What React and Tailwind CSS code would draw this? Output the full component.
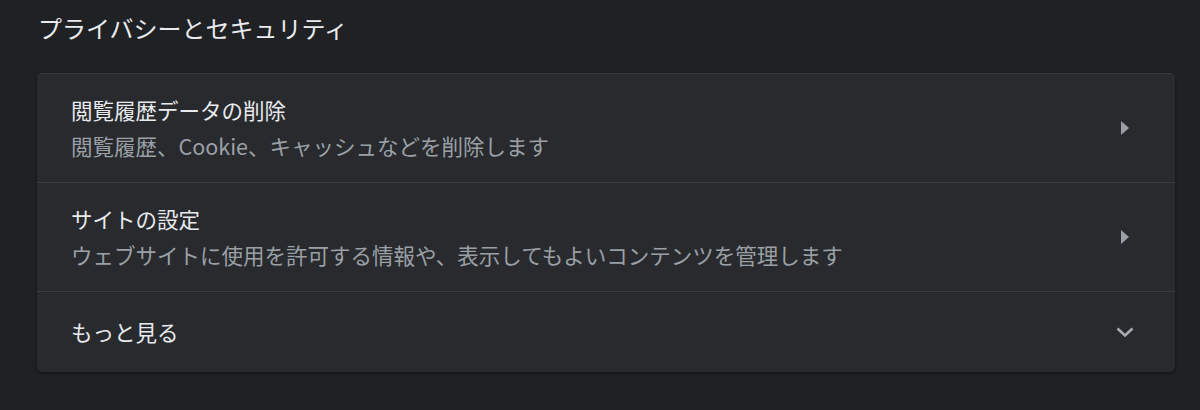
import React from "react";

const font = { fontFamily: '"Noto Sans CJK JP", "Noto Sans", sans-serif' };

function Triangle() {
  return (
    <svg width="24" height="24" viewBox="0 0 24 24" className="shrink-0">
      <path d="M8 5 L16 12 L8 19 Z" fill="#9aa0a6" />
    </svg>
  );
}

function Chevron() {
  return (
    <svg width="24" height="24" viewBox="0 0 24 24" className="shrink-0">
      <path d="M4.5 8.5 L12 15.5 L19.5 8.5" fill="none" stroke="#a8acb1" strokeWidth="2.6" />
    </svg>
  );
}

function Row({ title, sub, icon, last }) {
  return (
    <div
      className={`flex items-center pl-[34px] pr-[38px] ${sub ? "py-[18px]" : "py-[22px]"} ${
        last ? "" : "border-b border-[#3c3d41]"
      }`}
    >
      <div className="flex-1 flex flex-col">
        <div className="text-[21.5px] leading-[36px] text-[#e8eaed]">{title}</div>
        {sub && <div className="text-[21.5px] leading-[36px] text-[#9aa0a6]">{sub}</div>}
      </div>
      {icon}
    </div>
  );
}

export default function App() {
  return (
    <div className="w-[1200px] h-[410px] bg-[#202124] overflow-hidden" style={font}>
      <div className="pt-[10px] pl-[38px] text-[24px] leading-[36px] text-[#e8eaed]">
        プライバシーとセキュリティ
      </div>
      <div className="mt-[27px] ml-[37px] w-[1138px] bg-[#292a2d] rounded-[5px] border-t border-[#3a3b3e] shadow-[0_1px_3px_rgba(0,0,0,0.5)]">
        <Row
          title="閲覧履歴データの削除"
          sub="閲覧履歴、Cookie、キャッシュなどを削除します"
          icon={<Triangle />}
        />
        <Row
          title="サイトの設定"
          sub="ウェブサイトに使用を許可する情報や、表示してもよいコンテンツを管理します"
          icon={<Triangle />}
        />
        <Row title="もっと見る" icon={<Chevron />} last />
      </div>
    </div>
  );
}
